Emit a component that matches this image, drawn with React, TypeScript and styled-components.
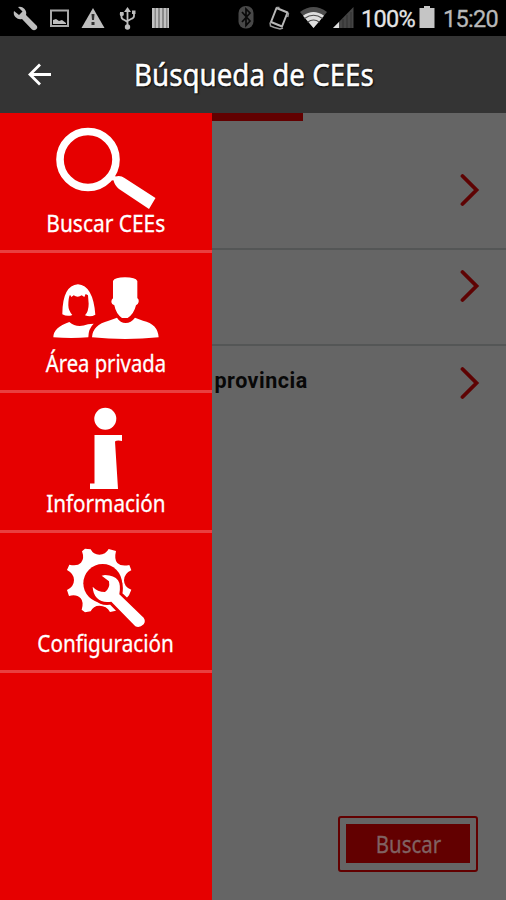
import React from 'react';
import styled, { createGlobalStyle } from 'styled-components';

const Global = createGlobalStyle`
  *, *::before, *::after { box-sizing: border-box; }
  body { margin: 0; background: #666; overflow: hidden; }
`;

const Screen = styled.div`
  width: 506px;
  height: 900px;
  display: flex;
  flex-direction: column;
  overflow: hidden;
  background: #656565;
  font-family: 'Noto Sans', 'Open Sans', sans-serif;
`;

const StatusBar = styled.div`
  height: 36px;
  flex: none;
  display: flex;
  background: #000;
`;

const StatusIcons = styled.svg`
  display: block;
  flex: none;
`;

const StatusText = styled.span<{ $color: string; $width: number }>`
  width: ${(p) => p.$width}px;
  flex: none;
  font: 400 23.5px/38px Roboto, sans-serif;
  letter-spacing: -0.7px;
  color: ${(p) => p.$color};
  -webkit-text-stroke: 0.3px ${(p) => p.$color};
  white-space: nowrap;
`;

const AppBar = styled.header`
  height: 77px;
  flex: none;
  display: flex;
  align-items: center;
  background: #343434;
  color: #fff;
`;

const BackButton = styled.button`
  width: 134px;
  height: 77px;
  padding: 0 0 0 27px;
  border: 0;
  background: none;
  text-align: left;
  svg { display: block; }
`;

const Title = styled.h1<{ $fit: number }>`
  margin: 0;
  padding-top: 1px;
  font-weight: 400;
  font-size: 30px;
  line-height: 40px;
  white-space: nowrap;
  transform: scaleX(${(p) => p.$fit});
  transform-origin: left center;
  text-shadow: 0 0 2px #000, 1px 1px 2px #000;
  -webkit-text-stroke: 0.5px #fff;
`;

const Body = styled.div`
  flex: 1;
  display: flex;
  min-height: 0;
`;

const Drawer = styled.nav`
  width: 211.5px;
  flex: none;
  background: #e60000;
`;

const MenuItem = styled.a`
  height: 140px;
  display: flex;
  flex-direction: column;
  align-items: center;
  border-bottom: 3px solid #e93f3f;
  color: #fff;
  svg { display: block; flex: none; }
`;

const MenuLabel = styled.span<{ $fit: number }>`
  margin-top: -1px;
  font-size: 23.5px;
  line-height: 28px;
  white-space: nowrap;
  transform: scaleX(${(p) => p.$fit});
  -webkit-text-stroke: 0.3px #fff;
`;

const Content = styled.main`
  flex: 1;
  display: flex;
  flex-direction: column;
  background: #656565;
`;

const TabIndicator = styled.div`
  width: 91.5px;
  height: 8px;
  background: #620000;
`;

const Options = styled.div`
  flex: 1;
  padding-top: 32px;
`;

const Option = styled.div<{ $last?: boolean }>`
  height: ${(p) => (p.$last ? 96 : 96.5)}px;
  display: flex;
  justify-content: space-between;
  padding: 20px 26px 0 3px;
  border-bottom: ${(p) => (p.$last ? '0' : '2px solid #545656')};
  svg { display: block; margin-top: -0.5px; }
`;

const OptionLabel = styled.span`
  font: 700 21.5px/30px Roboto, sans-serif;
  letter-spacing: 0.5px;
  color: #080808;
`;

const Footer = styled.div`
  display: flex;
  justify-content: flex-end;
  padding: 0 28px 28px 0;
`;

const SearchButton = styled.button`
  width: 140px;
  height: 56px;
  padding: 6px;
  border: 2px solid #620000;
  border-radius: 3px;
  background: none;
  display: flex;
`;

const SearchFace = styled.span`
  flex: 1;
  display: flex;
  align-items: center;
  justify-content: center;
  margin-bottom: 1px;
  background: #620000;
  color: #806262;
  font: 400 23.5px/30px 'Noto Sans', sans-serif;
`;

const SearchLabel = styled.span<{ $fit: number }>`
  padding-left: 2px;
  transform: scaleX(${(p) => p.$fit});
  -webkit-text-stroke: 0.3px #806262;
`;

const LeftStatus = () => (
  <StatusIcons width="225" height="36" viewBox="0 0 225 36" fill="#bebebe">
    <path d="M18 7a6.500 6.500 0 0 1 8 8L37 26q1 2-1 3.500t-4 0L22 19a6.500 6.500 0 0 1-8-8l5 4 3.500-3.500Z" />
    <path d="M51 10.500h17v15.500H51Z" fill="none" stroke="#a9a9a9" strokeWidth="2" />
    <path d="M53 24v-4l3-1 3 2 3-1 4 3v1Z" />
    <path d="M93 8 104.500 28H81.500Z" />
    <path d="M91.500 14h3l-.5 6h-2Zm0 8h3v3h-3Z" fill="#303030" />
    <g fill="none" stroke="#bebebe" strokeWidth="1.8">
      <path d="M127.500 10v17M121.500 13v4q0 2 3 3l3 2M134 12v4q0 2-3 3l-3.500 2" />
    </g>
    <path d="m127.500 7 3.500 5h-7ZM120 12h3.500v3.500H120Zm12-1.500h3.500V14H132Z" />
    <circle cx="127.500" cy="27" r="2.700" />
    <circle cx="121.700" cy="14" r="2" />
    <path d="M152 8h17v20h-17Z" fill="#8a8a8a" />
    <path d="M152 8h2.500v20H152Zm4 0h2v20h-2Zm4 0h2v20h-2Zm4 0h2v20h-2Zm3.500 0h1.500v20h-1.500Z" fill="#c2c2c2" />
  </StatusIcons>
);

const RightStatus = () => (
  <StatusIcons width="136" height="36" viewBox="225 0 136 36">
    <rect x="238.500" y="6" width="15" height="22.500" rx="7" fill="#484848" />
    <path d="m242 12 8 9-4 4.500V9l4 4-8 9" fill="none" stroke="#090909" strokeWidth="1.700" />
    <path d="m276.500 8 11 4.500-5.500 14-11-4.500Z" fill="none" stroke="#b8b8b8" strokeWidth="2" strokeLinejoin="round" />
    <path d="m270 22.500.5 3.500 4 1.500 5.500 1.500 3-1M276.500 7.500l3 0M288.500 13l-.8 4" fill="none" stroke="#9a9a9a" strokeWidth="1.500" />
    <path d="M300 12q13.500-10 27 0L313.500 28Z" fill="#4c4c4c" />
    <path d="M303 15.700q10.500-7.500 21 0L313.500 28Z" fill="#dedede" />
    <path d="M304.500 18.500q9-6.500 18 0M307.500 22.300q6-4.500 12 0" stroke="#4c4c4c" strokeWidth="1.100" fill="none" />
    <path d="M353.500 7v21H333Z" fill="#454545" />
    <path d="M339 22v6h-6Z" fill="#e0e0e0" />
    <path d="M343 19v9m4-13v13m4-16v16" stroke="#303030" strokeWidth="1" />
  </StatusIcons>
);

const Battery = () => (
  <StatusIcons width="24" height="36" viewBox="0 0 24 36">
    <path d="M5 6h6v2h4.500v20H.5V8H5Z" fill="#c5c5c5" />
  </StatusIcons>
);

const Chevron = () => (
  <svg width="20" height="34" viewBox="0 0 20 34" fill="none" stroke="#5e0303" strokeWidth="3.800" strokeLinecap="round" strokeLinejoin="miter">
    <path d="M2.500 3 16.500 17 2.500 31" />
  </svg>
);

const SearchIcon = () => (
  <svg width="211" height="97" viewBox="0 113 211 97" fill="#fff">
    <circle cx="88" cy="159.500" r="28" fill="none" stroke="#fff" strokeWidth="7.600" />
    <path d="m109 173 6 4-3 4ZM115.500 176.500q5-1.500 9 1.500L155.500 198 149 209l-30-20q-4-3-5.500-8.500l-3-3 3.500-3.500Z" />
  </svg>
);

const PeopleIcon = () => (
  <svg width="211" height="97" viewBox="0 253 211 97" fill="#fff">
    <g transform="translate(48 272) scale(.3333)">
      <path d="M43 125Q44 40 90 37q45 3 52 91-14 8-31 2 11-12 11-35l-2-25-7-4-4 9-8-5q-12 8-24 0l-7 5-4-7q-5 9-5 32 0 16 12 29-15 6-30-2Z" />
      <path d="M16 196q0-30 48-46 22 20 56 7l17-2q-16 15-16 41-50 4-105 0Z" />
      <path d="M195 27q5-11 36-11 32 0 37 11v51q6 4 4 12-2 8-8 10-6 26-25 38h-17q-18-12-23-38-8-2-9-10 0-8 5-11Z" />
      <path d="M132 196q2-38 50-50l25-9q10 16 26 16t28-16l24 9q45 10 47 50-100 10-200 0Z" />
    </g>
  </svg>
);

const InfoIcon = () => (
  <svg width="211" height="97" viewBox="0 393 211 97" fill="#fff">
    <circle cx="105.300" cy="418.800" r="11" />
    <path d="M94.500 435H122v6q-5-1-7 .5l3 47.500H90v-5.500h4.500Z" />
  </svg>
);

const wrench =
  'M125 107 135 105Q163 106 174 121q9 13 4 42l73 70q7 10 0 20-12 12-25 6L154 185q-28 5-43-11-12-12-13-34 14 16 37 16 16-11 12-32Z';

const ConfigIcon = () => (
  <svg width="211" height="97" viewBox="0 533 211 97">
    <g transform="translate(60 540) scale(.3333)">
      <path
        d="M75 26 92 28Q100 44 118 44q19 0 28-17l22 6q-6 25 4 36 11 11 36 6l6 16q-22 10-22 30 0 21 22 28l-7 17-9 10-30 36-18 4q-10-19-32-19-18 0-26 17l-17 3-10-8q7-23-3-34-12-13-35-7l-6-18q21-10 21-30 0-19-21-30l7-16q24 6 35-6 11-12 3-34Z"
        fill="#fff"
      />
      <circle cx="128" cy="130" r="58" fill="#e60000" />
      <path d={wrench} fill="#e60000" stroke="#e60000" strokeWidth="18" strokeLinejoin="round" />
      <path d={wrench} fill="#fff" />
    </g>
  </svg>
);

const menu = [
  { label: 'Buscar CEEs', fit: 0.89, Icon: SearchIcon },
  { label: 'Área privada', fit: 0.86, Icon: PeopleIcon },
  { label: 'Información', fit: 0.88, Icon: InfoIcon },
  { label: 'Configuración', fit: 0.88, Icon: ConfigIcon },
];

export default function App() {
  return (
    <>
      <Global />
      <Screen>
        <StatusBar>
          <LeftStatus />
          <RightStatus />
          <StatusText $color="#e4e4e4" $width={58}>100%</StatusText>
          <Battery />
          <StatusText $color="#b8b8b8" $width={62}>15:20</StatusText>
        </StatusBar>
        <AppBar>
          <BackButton aria-label="Volver">
            <svg width="26" height="26" viewBox="0 0 26 26" fill="none" stroke="#fff" strokeWidth="2.800">
              <path d="M24 12.500H3M13 2.500 3 12.500l10 10" />
            </svg>
          </BackButton>
          <Title $fit={0.925}>Búsqueda de CEEs</Title>
        </AppBar>
        <Body>
          <Drawer>
            {menu.map(({ label, fit, Icon }) => (
              <MenuItem key={label}>
                <Icon />
                <MenuLabel $fit={fit}>{label}</MenuLabel>
              </MenuItem>
            ))}
          </Drawer>
          <Content>
            <TabIndicator />
            <Options>
              <Option><span /><Chevron /></Option>
              <Option><span /><Chevron /></Option>
              <Option $last><OptionLabel>provincia</OptionLabel><Chevron /></Option>
            </Options>
            <Footer>
              <SearchButton>
                <SearchFace><SearchLabel $fit={0.87}>Buscar</SearchLabel></SearchFace>
              </SearchButton>
            </Footer>
          </Content>
        </Body>
      </Screen>
    </>
  );
}
